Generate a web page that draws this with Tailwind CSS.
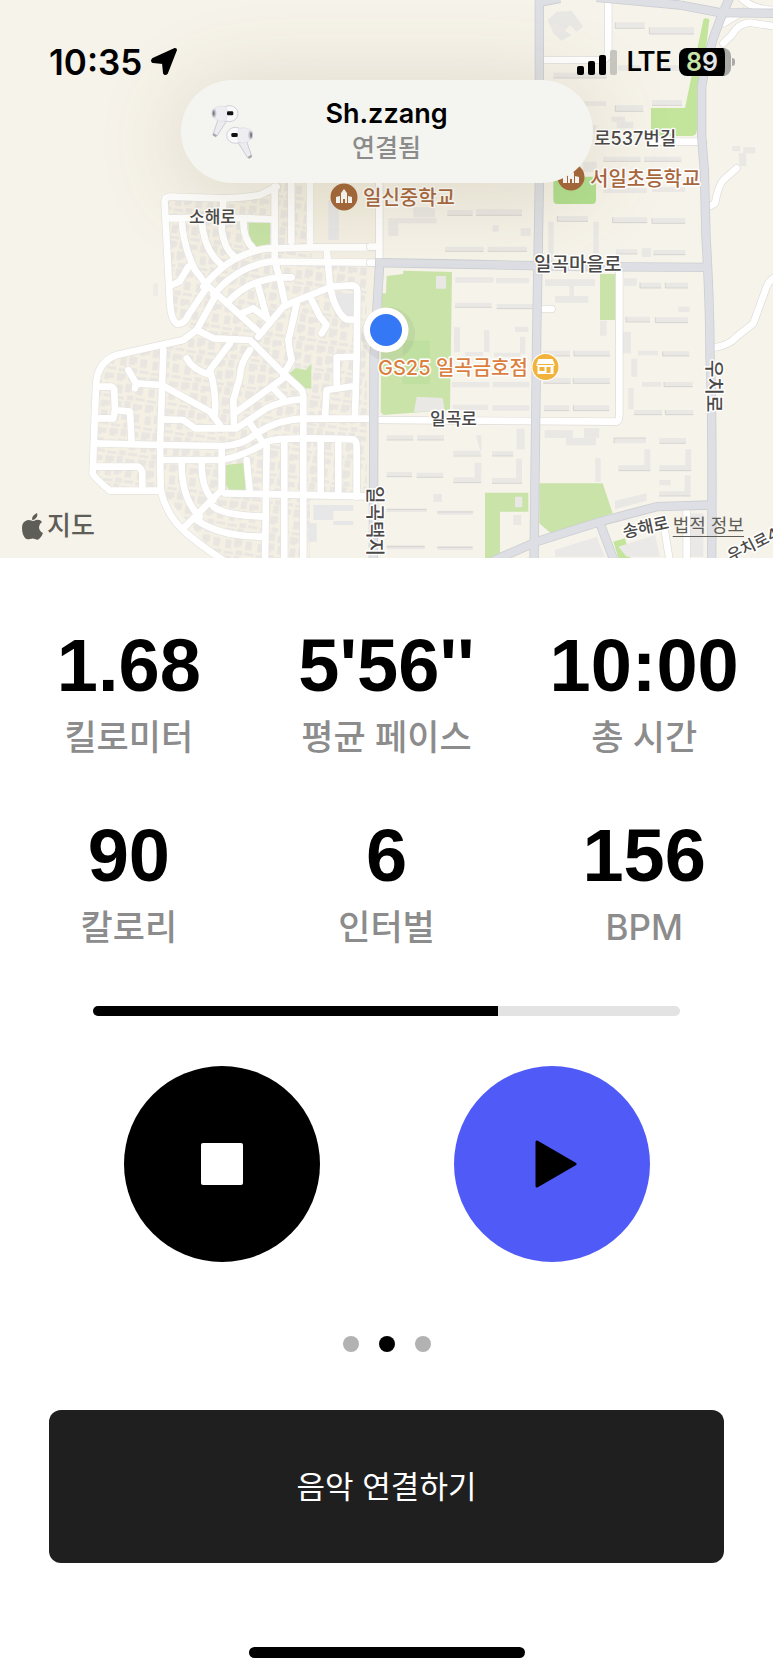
<!DOCTYPE html>
<html lang="ko">
<head>
<meta charset="utf-8">
<meta name="viewport" content="width=device-width, initial-scale=1">
<title>러닝</title>
<script src="https://cdn.jsdelivr.net/npm/@tailwindcss/browser@4"></script>
</head>
<body class="bg-white text-black font-['Inter','Noto_Sans_CJK_KR',sans-serif]">
<div class="flex min-h-screen flex-col">

<header class="relative overflow-hidden">
  <svg class="block h-auto w-full" viewBox="0 0 773 558" role="img" aria-label="지도">
    <defs>
      <pattern id="houses" width="97" height="83" patternUnits="userSpaceOnUse" patternTransform="rotate(8)">
        <g fill="#e9e6e2">
          <path d="M2 5h26v18h-8v6H2zM36 2h18v24H36zM62 8h28v16H76v5H62zM6 40h18v26H6zM32 34h24v20h-8v6H32zM66 38h20v26H66zM4 74h28v8H4zM40 68h20v14H40zM66 72h28v9H66z"/>
        </g>
      </pattern>
      <g id="west" fill="none" stroke-linecap="round" stroke-linejoin="round">
        <path d="M590 50L540 75Q480 85 430 85L270 80Q252 82 254 100L270 400Q275 460 295 462Q315 460 325 435L375 360"/>
        <path d="M258 145L420 142L580 148M305 148Q310 230 345 300L380 345L530 480M365 148Q370 240 425 285M430 90L425 180Q435 240 462 258M490 150Q490 210 520 235"/>
        <path d="M584 50V270L600 330L615 400M634 30V215M690 30V225M325 290L298 335L275 345"/>
        <path d="M370 350Q450 250 560 236L700 232L890 232M400 375Q470 290 570 275L895 278M440 400Q500 330 600 322L635 322"/>
        <path d="M740 235L750 350L760 390Q780 440 800 448L830 450M750 350L820 346Q832 350 832 365L830 560L770 562V650M830 560L825 740M735 740L740 660L825 648"/>
        <path d="M535 500L610 410Q640 395 680 380L755 350M650 400Q640 450 625 510Q630 550 635 570L610 615M695 390L720 440L740 465L725 490M535 350L560 440M485 430L520 415L560 445"/>
        <path d="M405 380L350 480L310 510L110 555Q50 575 48 650L38 910Q40 920 90 962L240 962"/>
        <path d="M350 480L400 505L510 510L610 610L660 655Q672 665 670 690V1180"/>
        <path d="M250 540L240 830L242 960Q260 1040 320 1090Q380 1140 430 1170"/>
        <path d="M450 520L390 600Q410 670 405 735M320 565Q340 600 385 612M510 540Q480 580 480 620L460 690L462 760"/>
        <path d="M145 600L168 640L165 655M168 640L245 645L390 725L420 765M50 650L95 650Q105 655 103 670L105 720L150 725L155 820M45 745L100 745L105 720"/>
        <path d="M45 820L240 825L430 828Q490 825 530 790Q600 745 680 746L900 746M250 748L310 750L345 775L470 775L560 715Q610 690 665 688M470 725L610 625M575 650L610 685M510 760L550 820"/>
        <path d="M250 870L425 870Q500 855 560 815Q600 800 820 808Q830 812 830 830V980M45 890L175 890Q185 895 187 910V960"/>
        <path d="M425 830V960L310 1075M305 880Q305 990 360 1040M365 880Q365 960 400 990M435 970L900 980M500 870L510 970"/>
        <path d="M560 820L555 1180M613 810V1180M722 810V975M775 810V975M400 1010Q430 1035 550 1040M350 1050Q420 1100 550 1100"/>
      </g>
      <g id="eastLanes" fill="none" stroke-linecap="round" stroke-linejoin="round">
        <path d="M22 750L740 755Q747 753 748 735V300M510 417H545M28 30V265M0 230H20M0 278H20"/>
        <path d="M1035 532Q1080 525 1100 500L1150 460L1190 350Q1200 325 1225 318M1022 108L1035 100Q1045 45 1060 30L1100 -5"/>
        <path d="M715 -510V-360Q715 -330 690 -330H520M850 -85H1000M1060 -380L1085 -405Q1105 -440 1140 -442L1220 -430M1060 -440L1120 -475M930 -510V-500"/>
        <path d="M1115 -515Q1150 -480 1215 -480M950 1010V1180M880 1055L900 1180"/>
      </g>
      <g id="mainRoads" fill="none" stroke-linejoin="round">
        <path d="M30 265L12 560L10 1180M20 278L250 282L640 290L1010 292"/>
        <path d="M508 -520V40L500 500L492 1180"/>
        <path d="M1080 -520L1050 -450Q1010 -350 995 -250V-100L1003 0L1008 200Q1020 400 1020 560Q1028 700 1025 1180"/>
        <path d="M508 -503L570 -515M680 -518L930 -495L1050 -472L1220 -470"/>
        <path d="M370 1172L500 1115L690 1055L860 1010L1020 1005M690 1060L735 1180"/>
      </g>
      <g id="school" fill="#fff">
        <path d="M-8 6V0l4-1v7zM8 6V0l-4-1v7zM-3 6V-4l3-4 3 4v10H1V2h-2v4z"/>
      </g>
    </defs>

    <rect width="773" height="558" fill="#f6f3ea"/>

    <g transform="translate(80 170) scale(.33333)">
      <path fill="#f4f0e4" d="M254 80L590 75V20H890V280L880 980L690 990V1180H430L242 962H90L38 910L48 650Q50 570 110 555L310 510L350 480L295 462Q270 460 254 100Z"/>
      <path fill="url(#houses)" d="M254 80L590 75V20H695V280L860 290V980L690 990V1180H430L242 962H90L38 910L48 650Q50 570 110 555L310 510L350 480L295 462Q270 460 254 100Z"/>
      <g fill="#e8e7e8"><path d="M745 90h32v120h-32zM765 370h55v70h-30zM700 1005h120v18h-60v30h60v12h-60v-15h-60zM685 1060h25v55h-25z"/></g>
      <path fill="#efece7" d="M220 340h14v38h-14z"/>
      <path fill="#c8e4a8" d="M506 158H570V222L524 230L506 205ZM628 610L648 594L678 600L694 580V657L665 652ZM438 885L496 878V962L450 964L438 945Z"/>
      <use href="#west" stroke="#e4e2de" stroke-width="24"/>
      <use href="#west" stroke="#fff" stroke-width="20"/>
    </g>

    <g transform="translate(370 170) scale(.33333)">
      <path fill="#c9e3a8" d="M50 318L100 312V302L246 306L240 720L40 735L32 725L35 370H48ZM690 312H736V450H690ZM345 968H475V1025H390V1170H345ZM508 940H698L728 1030L545 1092L508 1060Z"/>
      <path fill="#c2e49b" d="M1000 -450Q1002 -460 1018 -452L980 -115Q978 -102 960 -102H843V-186H945ZM730 1115L765 1105L785 1180H750Z"/>
      <path fill="#b2df90" d="M550 20H678V90Q678 102 666 102H562Q550 102 550 90Z"/>
      <path fill="#bfe0a0" d="M98 512H180V642H98Z"/>
      <g fill="#eae8e5">
        <path d="M198 318h30v38h-30zM140 680l78 4 6 38-92 4zM435 980h22v32h-22z"/>
        <path d="M55 145h145v15H85v38H55zM232 120h76v16h-76zM318 118h138v18H318zM368 165h18v20h-18zM452 175h30v22h-30zM225 230h116v14H225zM353 230h118v14H353zM130 112h65v30h-65z"/>
        <path d="M562 138h92v16h-92zM728 142h104v16H728zM846 144h100v16H846zM535 155h16v120h-16zM670 155h16v100h-16zM738 238h64v14h-64zM850 240h96v14h-96zM815 235h28v26h-28zM700 55h130v14H700zM846 52h100v14H846z"/>
        <path d="M256 322h114v16H256zM378 324h100v16H378zM255 398h110v14H255zM380 402h108v14H380zM252 472h18v74h-18zM342 480h16v66h-16zM450 500h16v52h-16zM435 470h40v16h-40zM285 546h54v12h-54zM372 548h80v12h-80zM246 636h112v16H246zM368 636h110v16H368zM248 704h106v16H248zM368 706h110v16H368z"/>
        <path d="M525 328h150v20H525zM598 345h14v35h-14zM555 378h100v20H555zM690 452h20v45h-20zM762 325h38v22h-38zM745 485h38v65h-38z"/>
        <path d="M520 542h80v16h-80zM612 542h108v16H612zM520 624h82v16h-82zM610 624h110v16H610zM522 706h76v16h-76zM610 706h108v16H610z"/>
        <path d="M810 338h64v16h-64zM886 338h68v16h-68zM768 440h72v16h-72zM856 442h98v16h-98zM804 542h60v14h-60zM878 544h80v14h-80zM784 566h18v54h-18zM816 636h58v14h-58zM882 636h86v14h-86zM775 654h16v64h-16zM792 720h84v14h-84zM886 720h84v14h-84zM925 410h34v16h-34z"/>
        <path d="M524 780h84v24h70v22h-90v-22h-64zM642 775h46v28h-46zM676 865h16v70h-16zM735 992l95-22v22l-95 26zM732 804h96v16h-96zM868 804h80v16h-80zM745 886h78v-48h18v64h-96zM868 886h78v-48h18v64h-96zM868 964h76v-48h18v62h-94zM868 930h34v16h-34z"/>
        <path d="M50 796h80v14H50zM142 796h80v14h-80zM318 796h16v46h-84v14h84zM366 844h64v14h-64zM440 776h24v62h-24zM50 906h76v14H50zM140 908h80v14h-80zM250 922h64v-44h20v60h-84zM366 924h72v-58h18v74h-90zM190 972h26v24h-26zM50 1016h120v10H50zM202 1022h106v12H202zM50 1126h114v12H50zM202 1128h106v12H202zM430 1035h24v30h-24z"/>
        <path d="M533 -450L560 -475L605 -478L640 -430L620 -415L600 -435L585 -418L605 -405L575 -388L550 -410ZM736 -443h88v18h-88zM838 -428h134v20H838zM550 -292h160v16H550zM640 -206h68v14h-68zM736 -194h84v18h-84zM846 -210h90v16h-90zM700 -40h112v14H700zM822 -40h112v14H822zM725 -160h40v15h-40zM740 -145h50v20h-50zM640 -135h40v25h-40zM880 -314h80v16h-80zM745 -314h65v16h-65zM1087 -72h24v16h-24zM1120 -68h36v18h-36zM1105 -50h24v38h-20zM640 -25h40v30h-40z"/>
      </g>
      <g fill="none" stroke="#cfcccb" stroke-width="3">
        <path d="M50 920h76M140 922h80M50 1018h120M202 1026h108M50 1130h114M202 1132h106M50 810h80M142 810h80M250 858h84M366 858h64M250 938h84M366 940h90M745 902h96M868 902h96M868 978h94M732 820v-16h96M868 820h80M810 354v-16M810 354h64M886 354v-16M886 354h68M768 456v-16M768 456h72M856 458v-16M856 458h98M612 558v-16M612 558h108M520 558h80M610 640v-16M610 640h110M520 640h82M610 722v-16M610 722h108M522 722h76M878 558v-14M878 558h80M882 650v-14M882 650h86M886 734v-14M886 734h84M792 734h84M728 158v-16M728 158h104M846 160v-16M846 160h100M562 154v-16M562 154h92M736 -443v18h88M838 -428v20h134M550 -276h160M736 -176h84M736 -176v-18M846 -194h90M232 136h76M318 136h138M225 244h116M353 244h118M255 412h110M380 416h108M738 252h64M850 254h96M700 -26h112M822 -26h112" opacity=".75"/>
      </g>
      <path fill="#ebe9e8" d="M555 1140l125-40 25 60H555zM745 1130l110-35 15 65H770zM965 1030h35v130h-60z"/>
      <use href="#eastLanes" stroke="#dedcd8" stroke-width="24"/>
      <use href="#eastLanes" stroke="#fff" stroke-width="20"/>
      <use href="#mainRoads" stroke="#cdced3" stroke-width="28"/>
      <use href="#mainRoads" stroke="#dddfe4" stroke-width="23"/>
    </g>

    <g stroke="#fff" stroke-width="3" stroke-linejoin="round" paint-order="stroke" font-weight="500" fill="#4b4947">
      <text x="189" y="223" font-size="17">소해로</text>
      <text x="594" y="145" font-size="18">로537번길</text>
      <text x="534" y="271" font-size="19">일곡마을로</text>
      <text x="430" y="425" font-size="17">일곡로</text>
      <text transform="translate(707 360) rotate(90)" font-size="19">우치로</text>
      <text transform="translate(368 486) rotate(90)" font-size="19">일곡택지</text>
      <text transform="translate(624 538) rotate(-12)" font-size="17">송해로</text>
      <text transform="translate(731 562) rotate(-27)" font-size="16">우치로4</text>
      <text x="363" y="205" font-size="20" fill="#a9673f">일신중학교</text>
      <text x="590" y="186" font-size="20" fill="#a9673f">서일초등학교</text>
      <text x="378" y="375" font-size="20" fill="#db7f40">GS25 일곡금호점</text>
    </g>
    <g transform="translate(344 197)"><circle r="13.5" fill="#a5673b"/><use href="#school"/></g>
    <g transform="translate(571 177)"><circle r="13.5" fill="#a5673b"/><use href="#school"/></g>
    <g transform="translate(545.5 367)"><circle r="14" fill="#fff"/><circle r="13" fill="#f2b33d"/><path fill="#fff" d="M-7-8H7l2 5v2h-1v8H-8v-8h-1v-2z"/><path fill="#f2b33d" d="M-8-3H8v1H-8zM-6 0h5v4h-5zM1 0h4v6H1z"/></g>

    <circle cx="388" cy="334" r="27" fill="#555" opacity=".08"/>
    <circle cx="386" cy="330" r="22.500" fill="#fff"/>
    <circle cx="386" cy="330" r="16" fill="#3478f6"/>
  </svg>

  <div class="absolute inset-x-0 top-20 flex justify-center">
    <section class="relative flex h-[103px] w-[412px] flex-col items-center justify-center rounded-full bg-[#f4f5f0] shadow-[0_10px_90px_rgba(110,95,40,0.20)]">
      <svg class="absolute left-7 top-6 h-14 w-12" viewBox="84 70 144 168" aria-hidden="true">
        <g id="bud">
          <path d="M112 114l24 8-28 44q-8 4-12-5z" fill="#ebebf0" stroke="#cbccd4" stroke-width="3"/>
          <path d="M97 157l11 7-4 5-9-5z" fill="#a5a6ae"/>
          <ellipse cx="145" cy="99" rx="26" ry="24" fill="#f9f9fc" stroke="#cfd0d8" stroke-width="3"/>
          <path d="M100 82q18-10 34-4 10 20 0 42-20 6-34-8z" fill="#ededf2" stroke="#dcdce3" stroke-width="2"/>
          <ellipse cx="99" cy="98" rx="7" ry="13" fill="#c5c6ce"/><ellipse cx="98" cy="98" rx="3" ry="8" fill="#777982"/>
          <rect x="138" y="92" width="19" height="12" rx="4" fill="#111"/>
        </g>
        <use href="#bud" transform="translate(308 65) scale(-1 1)"/>
      </svg>
      <h2 class="text-[27px] leading-8 font-semibold">Sh.zzang</h2>
      <p class="text-[25px] leading-9 font-medium text-[#8b8b8b]">연결됨</p>
    </section>
  </div>

  <div class="absolute inset-x-0 top-10 flex h-11 items-center justify-between pr-[38px] pl-[49px]">
    <div class="flex items-center gap-2">
      <time class="text-[35px] leading-none font-semibold">10:35</time>
      <svg class="size-7" viewBox="0 0 28 28" aria-hidden="true"><path d="M26 2L17 25q-2 2-3 0L13 15 3 14q-2-1 0-3L25 1q1 0 1 1z" stroke="#000" stroke-width="2" stroke-linejoin="round"/></svg>
    </div>
    <div class="flex items-center gap-2">
      <svg class="h-[27px] w-[42px]" viewBox="0 0 42 27" aria-hidden="true"><rect x="1" y="17" width="7" height="9" rx="2"/><rect x="12" y="12" width="7" height="14" rx="2"/><rect x="23" y="6" width="7" height="20" rx="2"/><rect x="34" y="1" width="7" height="25" rx="2" fill="#c5c4bf"/></svg>
      <span class="font-['Roboto',sans-serif] text-[28px] leading-none font-medium">LTE</span>
      <div class="flex items-center gap-px">
        <div class="flex h-7 w-[52px] items-center justify-center rounded-lg border-r-[6px] border-[#a9aaa6] bg-black text-[25px] leading-none font-semibold"><span class="text-[#c8e4a8]">8</span><span class="text-[#e4e5e8]">9</span></div>
        <div class="h-2 w-[3px] rounded-r-full bg-[#aaa]"></div>
      </div>
    </div>
  </div>

  <div class="absolute inset-x-0 bottom-4 flex items-center justify-between pr-[29px] pl-[22px] text-[#5f5d58]">
    <div class="flex items-center gap-1">
      <svg class="h-[27px] w-[21px]" viewBox="0 0 21 27" fill="currentColor" aria-hidden="true"><path d="M15 0q1 3-1 5-1 2-4 2 0-3 1-4 2-2 4-3zM11 8q1 0 3-1 4-1 6 2-3 2-3 5 0 4 4 6-1 3-3 5-2 3-5 1-2-1-5 0-3 1-5-1Q0 21 0 15q0-7 6-8 2 0 5 1z"/></svg>
      <span class="text-[26px] leading-8 font-medium">지도</span>
    </div>
    <a href="#legal" class="text-[18px] leading-8 underline underline-offset-4">법적 정보</a>
  </div>
</header>

<main class="flex flex-1 flex-col">
  <dl class="grid grid-cols-3 gap-y-12 pt-16 text-center">
    <div class="flex flex-col-reverse"><dt class="text-[35px] leading-[54px] font-medium text-[#8c8c8c]">킬로미터</dt><dd class="font-['Liberation_Sans',sans-serif] text-[74px] leading-[88px] font-bold">1.68</dd></div>
    <div class="flex flex-col-reverse"><dt class="text-[35px] leading-[54px] font-medium text-[#8c8c8c]">평균 페이스</dt><dd class="font-['Liberation_Sans',sans-serif] text-[74px] leading-[88px] font-bold">5'56''</dd></div>
    <div class="flex flex-col-reverse"><dt class="text-[35px] leading-[54px] font-medium text-[#8c8c8c]">총 시간</dt><dd class="font-['Liberation_Sans',sans-serif] text-[74px] leading-[88px] font-bold">10:00</dd></div>
    <div class="flex flex-col-reverse"><dt class="text-[35px] leading-[54px] font-medium text-[#8c8c8c]">칼로리</dt><dd class="font-['Liberation_Sans',sans-serif] text-[74px] leading-[88px] font-bold">90</dd></div>
    <div class="flex flex-col-reverse"><dt class="text-[35px] leading-[54px] font-medium text-[#8c8c8c]">인터벌</dt><dd class="font-['Liberation_Sans',sans-serif] text-[74px] leading-[88px] font-bold">6</dd></div>
    <div class="flex flex-col-reverse"><dt class="text-[35px] leading-[54px] font-medium text-[#8c8c8c]">BPM</dt><dd class="font-['Liberation_Sans',sans-serif] text-[74px] leading-[88px] font-bold">156</dd></div>
  </dl>

  <div class="mx-[12%] mt-[52px] h-[10px] overflow-hidden rounded-full bg-[#e3e3e3]" role="progressbar" aria-label="진행률" aria-valuenow="69" aria-valuemin="0" aria-valuemax="100">
    <div class="h-full bg-black" style="width:69%"></div>
  </div>

  <div class="mt-[50px] flex justify-center gap-[134px]">
    <button type="button" aria-label="정지" class="flex size-49 items-center justify-center rounded-full bg-black"><span class="size-[42px] rounded-xs bg-white"></span></button>
    <button type="button" aria-label="재생" class="flex size-49 items-center justify-center rounded-full bg-[#4f5af7] pl-2">
      <svg class="h-12 w-[42px]" viewBox="0 0 42 48" aria-hidden="true"><path d="M2 2V46L40 24Z" stroke="#000" stroke-width="3" stroke-linejoin="round"/></svg>
    </button>
  </div>

  <nav class="mt-[74px] flex justify-center gap-5" aria-label="페이지">
    <button type="button" aria-label="1" class="size-4 rounded-full bg-[#b2b2b2]"></button>
    <button type="button" aria-label="2" aria-current="page" class="size-4 rounded-full bg-black"></button>
    <button type="button" aria-label="3" class="size-4 rounded-full bg-[#b2b2b2]"></button>
  </nav>

  <button type="button" class="mx-[49px] mt-[58px] rounded-xl bg-[#1f1f1f] py-[52px] text-[31px] leading-[49px] text-white">음악 연결하기</button>

  <div class="mx-auto mt-auto mb-4 h-[11px] w-[276px] rounded-full bg-black"></div>
</main>
</div>
</body>
</html>
